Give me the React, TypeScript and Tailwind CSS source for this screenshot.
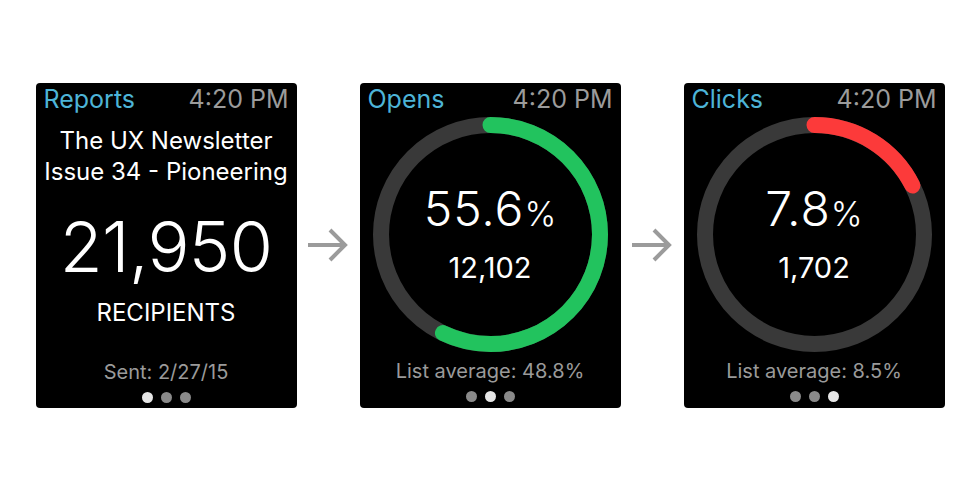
import React from "react";

// ─── Pieces ───────────────────────────────────────────────────────────────────

const FONT = "font-['Inter','Noto_Sans',sans-serif]";

function Header({ title }: { title: string }) {
  return (
    <div className="flex items-center justify-between px-2 pt-[4px] text-[25px] leading-[25px]">
      <span className="text-[#4db4d7]">{title}</span>
      <span className="text-[#9b9b9b]">4:20 PM</span>
    </div>
  );
}

function Dots({ active }: { active: number }) {
  return (
    <div className="flex justify-center gap-[8px]">
      {[0, 1, 2].map((i) => (
        <span
          key={i}
          className={`h-[11px] w-[11px] rounded-full ${
            i === active ? "bg-[#e6e6e6]" : "bg-[#8a8a8a]"
          }`}
        />
      ))}
    </div>
  );
}

function Arrow() {
  return (
    <div className="flex w-[63px] justify-center">
      <svg width="42" height="36" viewBox="0 0 42 36" fill="none">
        <path d="M1 18 H38" stroke="#9b9b9b" strokeWidth="4" />
        <path d="M23 3 L38 18 L23 33" stroke="#9b9b9b" strokeWidth="4" />
      </svg>
    </div>
  );
}

function Ring({ fraction, color }: { fraction: number; color: string }) {
  const r = 109.5;
  const c = 2 * Math.PI * r;
  return (
    <svg width="235" height="235" viewBox="0 0 235 235" className="block">
      <circle cx="117.5" cy="117.5" r={r} fill="none" stroke="#393939" strokeWidth="16" />
      <circle
        cx="117.5"
        cy="117.5"
        r={r}
        fill="none"
        stroke={color}
        strokeWidth="16"
        strokeLinecap="round"
        strokeDasharray={`${c * fraction} ${c}`}
        transform="rotate(-90 117.5 117.5)"
      />
    </svg>
  );
}

// ─── Cards ────────────────────────────────────────────────────────────────────

function ReportCard() {
  return (
    <div className="flex h-[325px] w-[261px] flex-col rounded-[4px] bg-black">
      <Header title="Reports" />
      <div className="mt-[13px] text-center text-[24px] leading-[31px] text-white">
        <div>The UX Newsletter</div>
        <div>Issue 34 - Pioneering</div>
      </div>
      <div className="mt-[25px] text-center text-[70px] font-light leading-[70px] tracking-[-0.01em] text-white">
        21,950
      </div>
      <div className="mt-[19px] text-center text-[24px] leading-[24px] text-white">
        RECIPIENTS
      </div>
      <div className="mt-[37px] text-center text-[20px] leading-[20px] text-[#9a9a9a]">
        Sent: 2/27/15
      </div>
      <div className="mt-[10px]">
        <Dots active={0} />
      </div>
    </div>
  );
}

function RateCard({
  title,
  rate,
  count,
  fraction,
  color,
  average,
  active,
}: {
  title: string;
  rate: string;
  count: string;
  fraction: number;
  color: string;
  average: string;
  active: number;
}) {
  return (
    <div className="flex h-[325px] w-[261px] flex-col rounded-[4px] bg-black">
      <Header title={title} />
      <div className="relative mx-auto mt-[5px]">
        <Ring fraction={fraction} color={color} />
        <div className="absolute inset-0 flex flex-col items-center pt-[68px] text-white">
          <div className="text-[48px] font-light leading-[48px]">
            <span className="tracking-[0.02em]">{rate}</span>
            <span className="text-[34px]">%</span>
          </div>
          <div className="mt-[15px] text-[29px] leading-[29px]">{count}</div>
        </div>
      </div>
      <div className="mt-[9px] text-center text-[20px] leading-[20px] text-[#9a9a9a]">
        {average}
      </div>
      <div className="mt-[10px]">
        <Dots active={active} />
      </div>
    </div>
  );
}

// ─── Page ─────────────────────────────────────────────────────────────────────

export default function App() {
  return (
    <div className={`flex h-[490px] w-[980px] items-center justify-center bg-white ${FONT}`}>
      <ReportCard />
      <Arrow />
      <RateCard
        title="Opens"
        rate="55.6"
        count="12,102"
        fraction={0.571}
        color="#22c35e"
        average="List average: 48.8%"
        active={1}
      />
      <Arrow />
      <RateCard
        title="Clicks"
        rate="7.8"
        count="1,702"
        fraction={0.176}
        color="#fc3a3a"
        average="List average: 8.5%"
        active={2}
      />
    </div>
  );
}
